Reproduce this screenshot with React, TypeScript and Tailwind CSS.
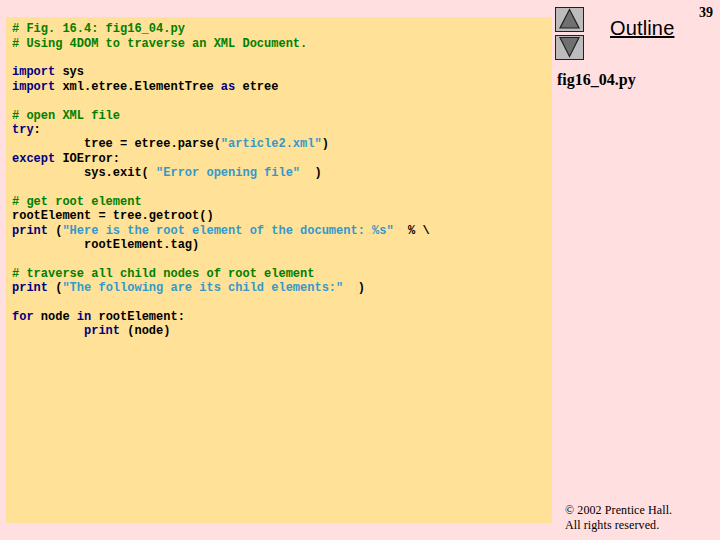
const G = "text-[#008000]";
const B = "text-[#000080]";
const S = "text-[#3399cc]";
const K = "text-black";

type Seg = [string, string];
const lines: Seg[][] = [
  [["# Fig. 16.4: fig16_04.py", G]],
  [["# Using 4DOM to traverse an XML Document.", G]],
  [],
  [["import", B], [" sys", K]],
  [["import", B], [" xml.etree.ElementTree ", K], ["as", B], [" etree", K]],
  [],
  [["# open XML file", G]],
  [["try", B], [":", K]],
  [["          tree = etree.parse(", K], ['"article2.xml"', S], [")", K]],
  [["except", B], [" IOError:", K]],
  [["          sys.exit( ", K], ['"Error opening file"', S], ["  )", K]],
  [],
  [["# get root element", G]],
  [["rootElement = tree.getroot()", K]],
  [["print", B], [" (", K], ['"Here is the root element of the document: %s"', S], ["  % \\", K]],
  [["          rootElement.tag)", K]],
  [],
  [["# traverse all child nodes of root element", G]],
  [["print", B], [" (", K], ['"The following are its child elements:"', S], ["  )", K]],
  [],
  [["for", B], [" node ", K], ["in", B], [" rootElement:", K]],
  [["          ", K], ["print", B], [" (node)", K]],
];

function NavButton({ up }: { up: boolean }) {
  return (
    <div className="w-[29px] h-[25px] bg-[#bcbcbc] border border-[#202020]">
      <svg viewBox="0 0 27 23" className="w-full h-full block">
        <polygon
          points={up ? "13.5,1.5 23,20 4,20" : "4,1.5 23,1.5 13.5,20.5"}
          fill="#707070"
          stroke="#202020"
          strokeWidth="1.2"
        />
      </svg>
    </div>
  );
}

export default function App() {
  return (
    <div className="relative w-[720px] h-[540px] overflow-hidden bg-[#ffdfdf] flex font-['Liberation_Serif',serif]">
      <main className="ml-[6px] mt-[17px] w-[546px] h-[506px] bg-[#ffe197] pl-[6px] pt-[5.25px]">
        <pre className="m-0 font-['Liberation_Mono',monospace] font-bold text-[12px] leading-[14.4px]">
          {lines.map((segs, i) => (
            <div key={i} className="h-[14.4px]">
              {segs.map(([t, c], j) => (
                <span key={j} className={c}>{t}</span>
              ))}
            </div>
          ))}
        </pre>
      </main>
      <aside className="flex-1 flex flex-col pt-[7px] pl-[3px]">
        <div className="flex">
          <div className="flex flex-col gap-[3px]">
            <NavButton up />
            <NavButton up={false} />
          </div>
          <div className="ml-[26px] mt-[9px] font-['Liberation_Sans',sans-serif] text-[20px] leading-[24px] tracking-[0.15px] underline text-black">
            Outline
          </div>
        </div>
        <div className="mt-[10px] pl-[2px] font-bold text-[16px] leading-[20px] text-black">fig16_04.py</div>
        <div className="mt-auto mb-[7px] pl-[10px] text-[12px] leading-[15px] tracking-[0.1px] text-black">
          <div>© 2002 Prentice Hall.</div>
          <div>All rights reserved.</div>
        </div>
      </aside>
      <div className="absolute top-[6px] right-[7px] font-bold text-[14px] leading-[14px] text-black">39</div>
    </div>
  );
}
